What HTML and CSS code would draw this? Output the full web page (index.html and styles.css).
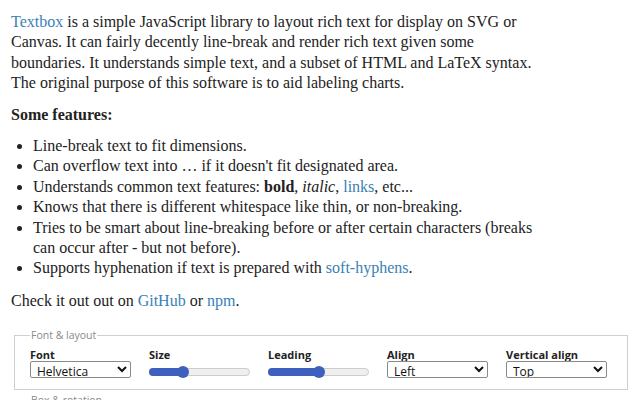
FILE: index.html
```
<!DOCTYPE html>
<html>
<head>
<meta charset="utf-8">
<link rel="stylesheet" href="styles.css">
</head>
<body>
<p class="intro"><a href="#">Textbox</a> is a simple JavaScript library to layout rich text for display on SVG or<br>Canvas. It can fairly decently line-break and render rich text given some<br>boundaries. It understands simple text, and a subset of HTML and LaTeX syntax.<br>The original purpose of this software is to aid labeling charts.</p>
<p class="heading"><strong>Some features:</strong></p>
<ul class="features">
<li>Line-break text to fit dimensions.</li>
<li>Can overflow text into &hellip; if it doesn't fit designated area.</li>
<li>Understands common text features: <b>bold</b>, <i>italic</i>, <a href="#">links</a>, etc...</li>
<li>Knows that there is different whitespace like thin, or non-breaking.</li>
<li>Tries to be smart about line-breaking before or after certain characters (breaks can occur after - but not before).</li>
<li>Supports hyphenation if text is prepared with <a href="#">soft-hyphens</a>.</li>
</ul>
<p class="check">Check it out out on <a href="#">GitHub</a> or <a href="#">npm</a>.</p>
<fieldset class="group">
<legend>Font &amp; layout</legend>
<div class="controls">
<label class="ctrl"><span class="lbl">Font</span>
<select class="sel"><option>Helvetica</option></select></label>
<label class="ctrl"><span class="lbl">Size</span>
<span class="range"><span class="fill" style="width:33%"></span><span class="thumb" style="left:33%"></span></span></label>
<label class="ctrl"><span class="lbl">Leading</span>
<span class="range"><span class="fill" style="width:50%"></span><span class="thumb" style="left:50%"></span></span></label>
<label class="ctrl"><span class="lbl">Align</span>
<select class="sel"><option>Left</option></select></label>
<label class="ctrl"><span class="lbl">Vertical align</span>
<select class="sel"><option>Top</option></select></label>
</div>
</fieldset>
<fieldset class="group second">
<legend>Box &amp; rotation</legend>
<div class="controls"></div>
</fieldset>
</body>
</html>
```
FILE: styles.css
```
html, body { margin: 0; padding: 0; background: #fff; }
body {
  padding: 12px 11px 0 11px;
  font-family: "Liberation Serif", serif;
  font-size: 16px;
  line-height: 20.4px;
  color: #222;
}
a { color: #3a7fb5; text-decoration: none; }
p { margin: 0; }
.intro { white-space: nowrap; }
.heading { margin-top: 11px; }
.features { margin: 11px 0 0 0; padding-left: 22px; width: 500px; }
.check { margin-top: 12px; }
.group {
  margin: 18px 1px 0 3px;
  border: 1px solid #cfcfcf;
  padding: 7px 15px 11px 15px;
  font-family: "Open Sans", sans-serif;
}
.group.second { margin-top: 4px; }
.group legend {
  font-size: 10.5px;
  color: #8a8a8a;
  padding: 0 1px;
  line-height: 12px;
}
.controls { display: flex; gap: 18px; }
.ctrl { display: flex; flex-direction: column; width: 101px; }
.lbl { font-size: 11px; font-weight: 700; color: #222; line-height: 13px; margin-bottom: 0; }
.sel {
  font-family: "Open Sans", sans-serif;
  font-size: 12px;
  height: 17px;
  border: 1px solid #8a8a8a;
  border-radius: 2px;
  background: #fff;
  color: #111;
  padding: 0 2px;
}
.range {
  position: relative;
  height: 6px;
  margin: 7px 0 0 0;
  border: 1px solid #cdcdcd;
  border-radius: 5px;
  background: #efefef;
}
.fill {
  position: absolute; left: -1px; top: -1px; bottom: -1px;
  background: #3d5fbd; border-radius: 5px;
}
.thumb {
  position: absolute; top: 50%; width: 12px; height: 12px;
  margin: -6px 0 0 -6px;
  border-radius: 50%; background: #3d5fbd;
}
```
